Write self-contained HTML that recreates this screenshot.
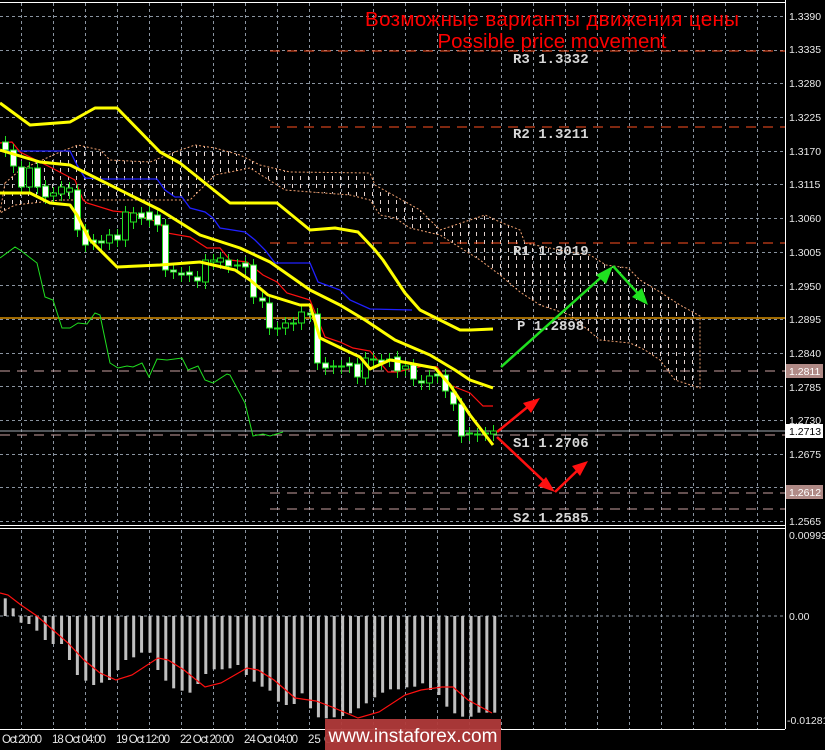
<!DOCTYPE html>
<html><head><meta charset="utf-8"><style>
html,body{margin:0;padding:0;background:#000;width:825px;height:750px;overflow:hidden}
svg{display:block}
</style></head><body>
<svg id="s" width="825" height="750" xmlns="http://www.w3.org/2000/svg" font-family="Liberation Sans, sans-serif">
<defs>
<pattern id="cl" width="8" height="8" patternUnits="userSpaceOnUse">
<line x1="4.5" y1="0" x2="4.5" y2="4" stroke="#e0d0cc" stroke-width="1"/>
</pattern>
<clipPath id="main"><rect x="0" y="0" width="785" height="524"/></clipPath>
</defs>
<rect width="825" height="750" fill="#000"/>
<g id="grid" stroke="#8a94a0" stroke-width="1" stroke-dasharray="3,3"></g>
<g clip-path="url(#main)">
<polygon points="5,183 20,170 60,152 78,145 100,150 110,160 150,162 175,152 195,145 215,148 240,155 260,165 290,172 370,173 375,185 420,210 440,230 485,215 500,222 520,230 525,243 560,250 590,255 606,265 628,268 640,280 660,292 680,305 700,316 700,388 675,380 660,360 645,350 630,343 600,340 570,315 540,305 520,292 500,275 480,260 440,235 410,228 395,218 380,215 370,200 350,195 285,190 250,168 215,175 205,185 190,200 100,200 60,200 15,205 0,213" fill="url(#cl)" stroke="#f0a070" stroke-width="1" stroke-dasharray="2,2"/>
<line x1="270" y1="51" x2="785" y2="51" stroke="#ff5020" stroke-dasharray="10,7"/>
<line x1="270" y1="127" x2="785" y2="127" stroke="#ff5020" stroke-dasharray="10,7"/>
<line x1="270" y1="243" x2="785" y2="243" stroke="#ff5020" stroke-dasharray="10,7"/>
<line x1="0" y1="318" x2="785" y2="318" stroke="#ffaa00" stroke-width="1.2"/>
<line x1="0" y1="371" x2="785" y2="371" stroke="#c8a0a0" stroke-dasharray="10,7"/>
<line x1="0" y1="431" x2="785" y2="431" stroke="#a0a8b0"/>
<line x1="0" y1="435" x2="785" y2="435" stroke="#c8a0a0" stroke-dasharray="10,7"/>
<line x1="270" y1="493" x2="785" y2="493" stroke="#c8a0a0" stroke-dasharray="10,7"/>
<line x1="270" y1="509" x2="785" y2="509" stroke="#c8a0a0" stroke-dasharray="10,7"/>
<g font-family="Liberation Mono, monospace" font-weight="bold" font-size="14" fill="#d8d8d8">
<text x="513" y="63">R3 1.3332</text>
<text x="513" y="138">R2 1.3211</text>
<text x="513" y="255">R1 1.3019</text>
<text x="517" y="330">P 1.2898</text>
<text x="513" y="447">S1 1.2706</text>
<text x="513" y="522">S2 1.2585</text>
</g>
<polyline fill="none" stroke="#20e020" stroke-width="1" points="0,258 15,247 20,250 37,263 45,297 53,300 62,328 70,328 78,323 87,324 95,313 100,315 110,363 118,368 127,366 133,367 142,363 149,377 157,359 167,360 182,358 188,370 198,366 205,380 213,383 227,374 230,375 245,403 253,436 263,434 270,436 283,432"/>
<polyline fill="none" stroke="#2020ff" stroke-width="1.3" points="0,151 70,151 77,165 85,178 100,179 157,179 165,190 175,197 182,197 190,208 205,212 213,218 220,228 245,232 255,240 265,250 275,263 310,263 318,282 340,290 350,300 370,309 412,310"/>
<polyline fill="none" stroke="#ff1010" stroke-width="1.2" points="0,143 12,142 20,152 50,167 75,180 83,200 87,203 113,211 133,213 160,223 167,233 190,237 207,248 220,248 230,260 247,262 263,275 277,282 287,293 310,300 325,337 340,342 353,348 370,351 388,372 397,372 423,366 437,367 450,385 470,393 483,406 493,406"/>
<g id="candles"></g>
<polyline fill="none" stroke="#ffff00" stroke-width="3" stroke-linejoin="round" points="0,103 30,125 70,122 95,108 117,108 160,152 180,163 230,203 277,203 310,230 335,228 358,232 375,250 383,260 405,293 420,310 440,320 460,330 470,330 493,329"/>
<polyline fill="none" stroke="#ffff00" stroke-width="3" stroke-linejoin="round" points="0,150 40,162 70,165 90,175 130,195 160,210 200,235 240,248 270,262 310,290 340,305 365,320 395,340 430,355 455,370 470,380 493,388"/>
<polyline fill="none" stroke="#ffff00" stroke-width="3" stroke-linejoin="round" points="0,193 30,193 50,203 70,205 77,215 90,240 117,267 160,265 200,262 235,270 250,280 268,295 300,305 310,305 320,338 345,350 360,357 370,369 390,360 403,362 435,368 450,385 470,415 493,445"/>
<g stroke-width="2.5" fill="none">
<line x1="501" y1="367" x2="606" y2="273" stroke="#20e020"/>
<line x1="613" y1="266" x2="643" y2="299" stroke="#20e020"/>
<line x1="497" y1="432" x2="530" y2="405" stroke="#ff1010"/>
<line x1="497" y1="437" x2="550" y2="487" stroke="#ff1010"/>
<line x1="555" y1="492" x2="580" y2="468" stroke="#ff1010"/>
</g>
<polygon points="613,266 596,275 606,284" fill="#20e020"/>
<polygon points="648,305 632,297 642,288" fill="#20e020"/>
<polygon points="540,398 523,403 531,413" fill="#ff1010"/>
<polygon points="555,492 538,486 546,477" fill="#ff1010"/>
<polygon points="588,461 572,466 580,476" fill="#ff1010"/>
<text x="552" y="26" text-anchor="middle" font-size="20.5" fill="#ff0000" textLength="374">Возможные варианты движения цены</text>
<text x="552" y="48" text-anchor="middle" font-size="20.5" fill="#ff0000">Possible price movement</text>
</g>
<line x1="0" y1="2.5" x2="785" y2="2.5" stroke="#fff"/>
<line x1="785.5" y1="0" x2="785.5" y2="729" stroke="#fff"/>
<line x1="0" y1="525.5" x2="785" y2="525.5" stroke="#fff"/>
<line x1="0" y1="528.5" x2="785" y2="528.5" stroke="#fff"/>
<line x1="0" y1="729.5" x2="785" y2="729.5" stroke="#fff"/>
<line x1="0" y1="616" x2="785" y2="616" stroke="#8a94a0" stroke-dasharray="3,3"/>
<g id="hist"></g>
<polyline fill="none" stroke="#ff1010" stroke-width="1.2" points="0,593 8,595 21,605 37,616 53,630 68,643 84,660 100,673 116,680 132,675 158,658 168,660 184,670 205,687 221,683 247,668 258,670 274,680 295,698 316,701 332,707 358,718 379,712 405,695 421,690 442,687 453,687 468,700 492,713"/>
<g font-size="10.5" fill="#e8e8e8" font-family="Liberation Sans, sans-serif">
<text x="789" y="20">1.3390</text><text x="789" y="53">1.3335</text><text x="789" y="87">1.3280</text><text x="789" y="121">1.3225</text><text x="789" y="155">1.3170</text><text x="789" y="188">1.3115</text><text x="789" y="222">1.3060</text><text x="789" y="256">1.3005</text><text x="789" y="290">1.2950</text><text x="789" y="323">1.2895</text><text x="789" y="357">1.2840</text><text x="789" y="391">1.2785</text><text x="789" y="424">1.2730</text><text x="789" y="458">1.2675</text><text x="789" y="525">1.2565</text>
<rect x="786" y="364" width="37" height="14" fill="#b08a86"/><text x="789" y="375" fill="#fff">1.2811</text>
<rect x="786" y="424" width="37" height="14" fill="#fff"/><text x="789" y="435" fill="#000">1.2713</text>
<rect x="786" y="485" width="37" height="14" fill="#b08a86"/><text x="789" y="496" fill="#fff">1.2612</text>
<text x="789" y="539">0.00993</text><text x="789" y="620">0.00</text><text x="787" y="724">-0.01281</text>
</g>
<g font-size="11.5" fill="#e8e8e8" font-family="Liberation Sans Narrow, Liberation Sans, sans-serif">
<text x="2" y="743" textLength="40">Oct 20:00</text>
<text x="52" y="743" textLength="54">18 Oct 04:00</text>
<text x="116" y="743" textLength="54">19 Oct 12:00</text>
<text x="180" y="743" textLength="54">22 Oct 20:00</text>
<text x="244" y="743" textLength="54">24 Oct 04:00</text>
<text x="308" y="743">25 Oct</text>
</g>
<rect x="325" y="719" width="176" height="31" fill="#b03a3a" opacity="0.95"/>
<text x="413" y="742" text-anchor="middle" font-size="19" fill="#fff">www.instaforex.com</text>
</svg>
<script>
var NS="http://www.w3.org/2000/svg";
function el(p,t,a){var e=document.createElementNS(NS,t);for(var k in a)e.setAttribute(k,a[k]);p.appendChild(e);return e;}
var g=document.getElementById('grid');
for(var x=21;x<785;x+=32){el(g,'line',{x1:x+.5,y1:3,x2:x+.5,y2:524});el(g,'line',{x1:x+.5,y1:530,x2:x+.5,y2:729});}
for(var i=0;i<16;i++){var y=Math.round(16+i*33.66)+.5;el(g,'line',{x1:0,y1:y,x2:785,y2:y});}
var C=[[5,142,150],[13,150,166],[21,167,187],[29,187,168],[37,168,187],[45,186,197],[53,196,193],[61,194,187],[69,192,188],[77,190,230],[85,230,245],[93,240,243],[101,241,243],[109,243,235],[117,235,240],[125,240,212],[133,222,213],[141,213,218],[149,212,220],[157,215,225],[165,225,270],[173,270,272],[181,273,275],[189,272,275],[197,277,281],[205,282,260],[213,262,260],[220,262,258],[228,260,266],[237,265,266],[245,263,267],[253,265,297],[262,298,301],[269,303,328],[277,328,329],[285,328,323],[293,323,324],[301,323,312],[310,313,315],[317,314,363],[325,363,368],[333,366,367],[341,366,367],[349,363,366],[357,364,377],[365,378,358],[373,359,360],[381,360,363],[389,359,360],[397,357,371],[405,369,366],[413,365,379],[421,381,383],[429,383,376],[437,374,376],[445,375,391],[453,392,404],[461,404,436],[469,433,434],[477,434,435],[485,433,434],[493,434,431]];
var cg=document.getElementById('candles');
C.forEach(function(c){var t=Math.min(c[1],c[2]),b=Math.max(c[1],c[2]);
el(cg,'line',{x1:c[0]+.5,y1:t-6,x2:c[0]+.5,y2:b+7,stroke:'#20e020','stroke-width':1});
var h=Math.max(b-t,1);
el(cg,'rect',{x:c[0]-2.5,y:t,width:6,height:h,fill:(c[2]>c[1]?'#fff':'#000'),stroke:'#20e020','stroke-width':1});});
var hz=[10,25,40,55,70,86,101,117,132,147,163,178,193,208,224,239,254,269,285,300,315,330,346,361,376,391,407,422,437,452,468,483,498,513,529,544,559,574,590,605,620,635,651,666,681,696,712,727,742,757,773,788,803,818,834,849,864,879,895,910,925,940];
var hv=[55,85,128,132,152,180,192,192,240,285,302,315,308,300,270,240,232,218,218,270,302,325,332,338,312,282,268,268,265,255,285,305,320,332,365,375,372,340,385,412,415,412,408,400,385,370,352,338,328,328,322,320,310,330,345,380,400,410,410,398,398,398];
var hg=document.getElementById('hist');
hz.forEach(function(zx,i){var x=zx/1.9,y=580+hv[i]/3;var t=Math.min(y,616),b=Math.max(y,616);
el(hg,'rect',{x:x-1.5,y:t,width:3,height:b-t,fill:'#c0c0c0'});});
</script>
</body></html>
